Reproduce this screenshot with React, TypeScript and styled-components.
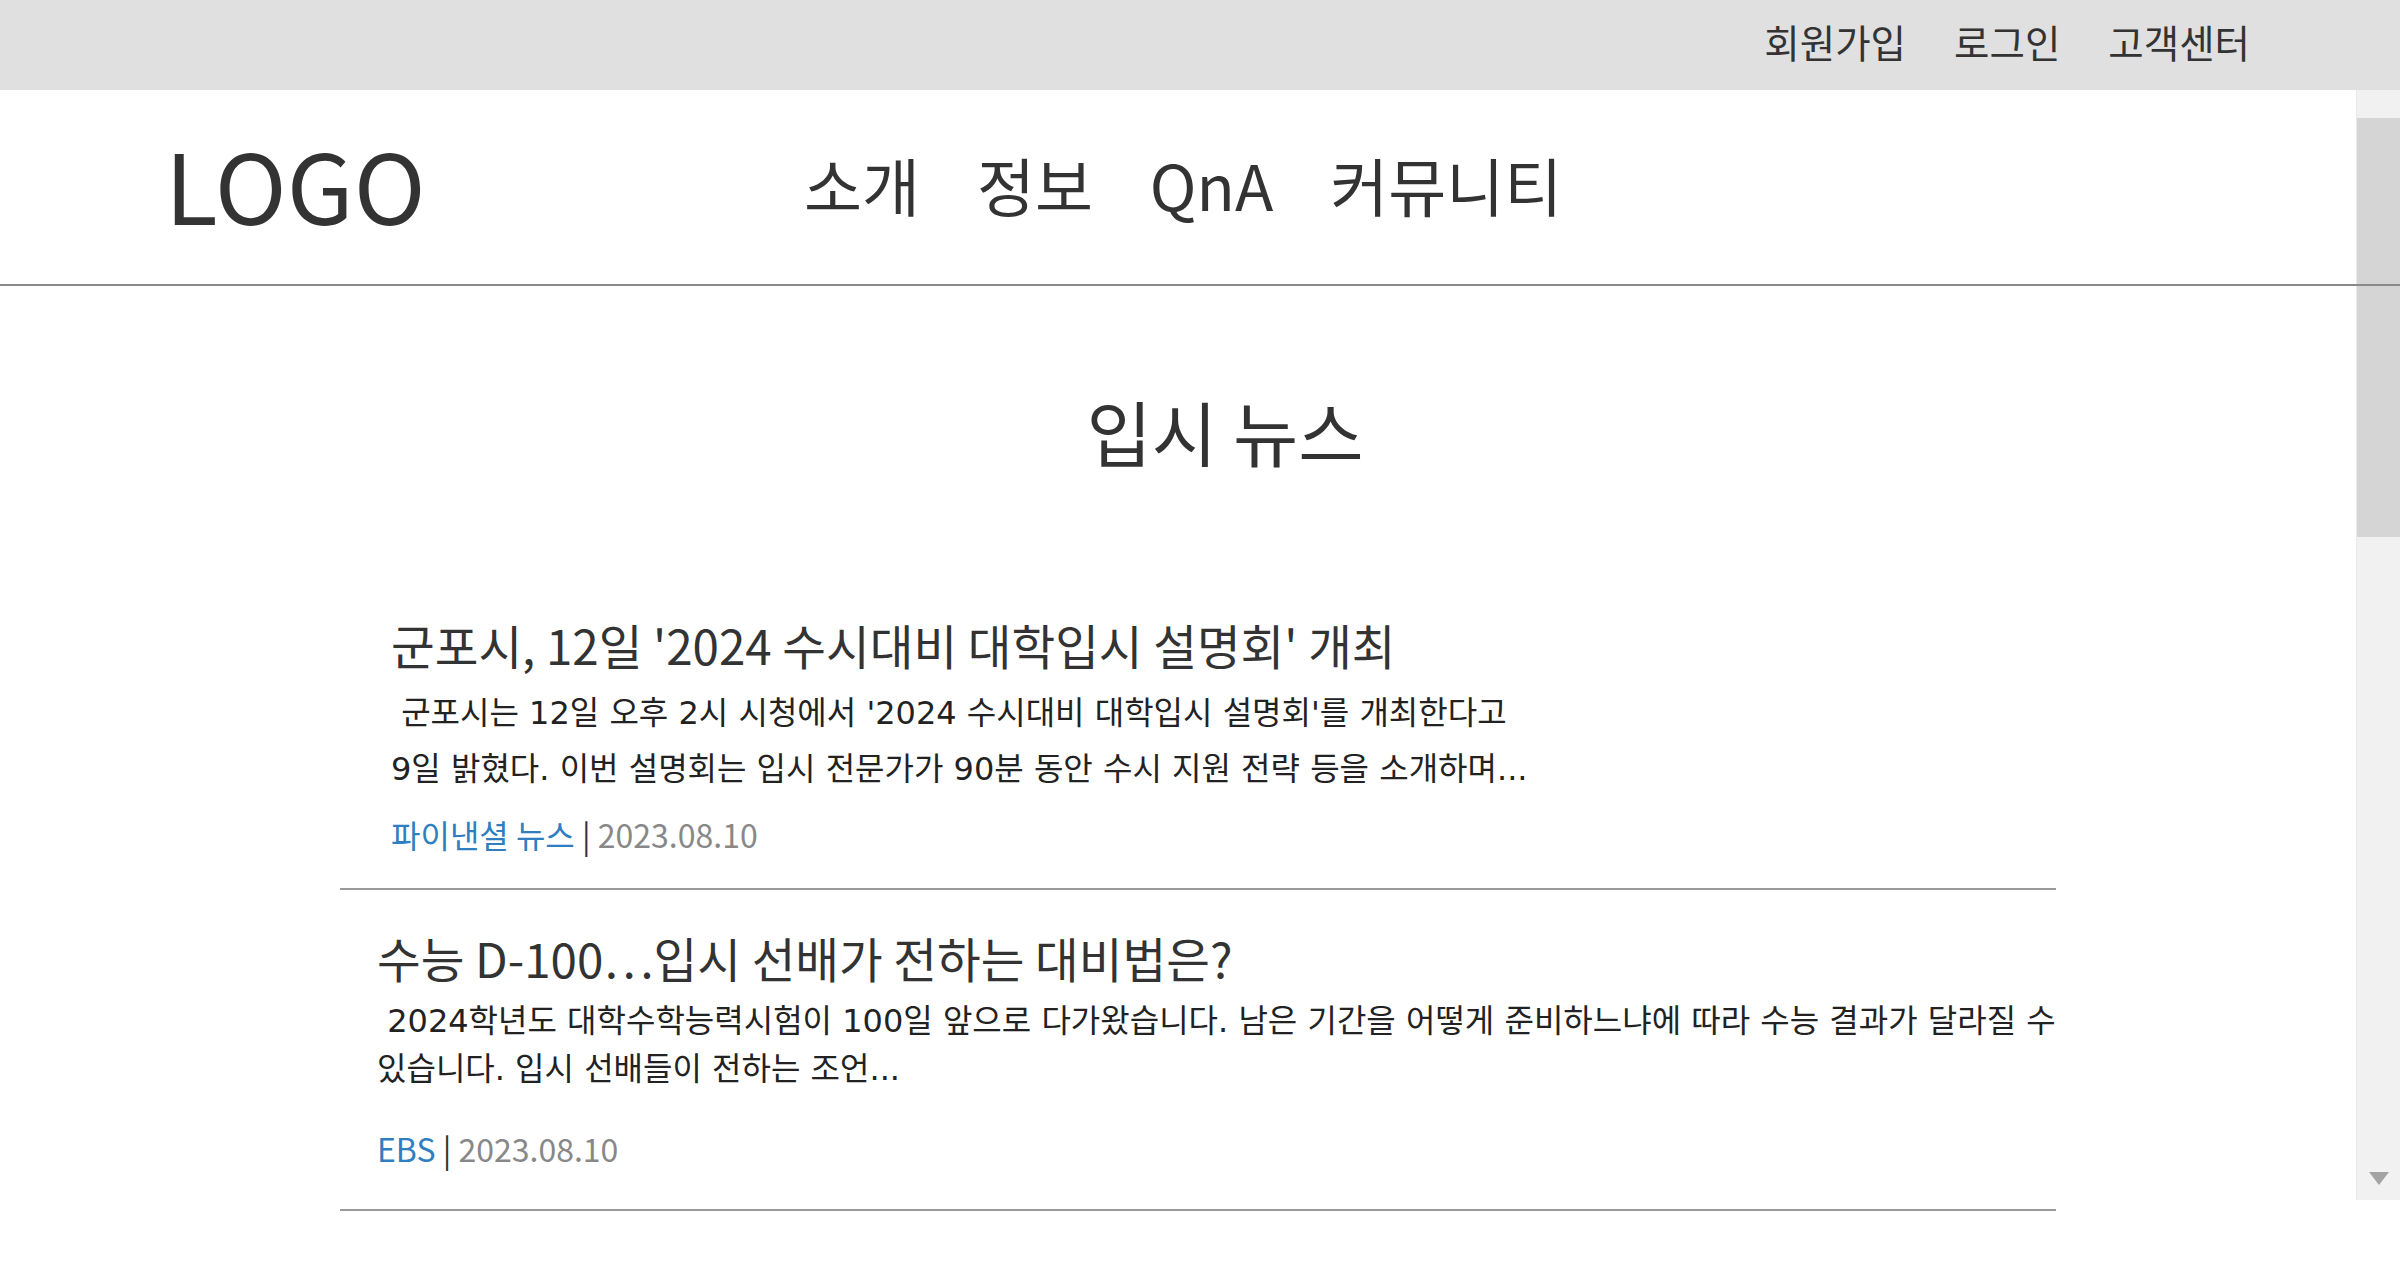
import React from "react";
import styled, { createGlobalStyle } from "styled-components";

const Global = createGlobalStyle`
  html, body {
    margin: 0;
    padding: 0;
    background: #ffffff;
    overflow: hidden;
  }
  body {
    width: 2400px;
    height: 1268px;
    font-family: "Noto Sans CJK KR", "Noto Sans", sans-serif;
    color: #333333;
  }
  * { box-sizing: border-box; }
`;

const Page = styled.div`
  width: 2400px;
  height: 1268px;
  display: flex;
  flex-direction: column;
  background: #ffffff;
`;

const TopBar = styled.div`
  height: 90px;
  background: #e0e0e0;
  display: flex;
  align-items: center;
  justify-content: flex-end;
  gap: 48px;
  padding-right: 150px;
  padding-bottom: 7px;
`;

const TopLink = styled.a`
  font-family: "Noto Sans CJK KR", sans-serif;
  font-size: 38.5px;
  line-height: 1.2;
  color: #333333;
  text-decoration: none;
`;

const Body = styled.div`
  position: relative;
  flex: 1;
`;

const Header = styled.header`
  position: relative;
  z-index: 2;
  height: 196px;
  display: flex;
  align-items: center;
  padding-left: 165px;
  border-bottom: 2px solid #8a8a8a;
`;

const Logo = styled.div`
  width: 639px;
  font-family: "Noto Sans CJK KR", sans-serif;
  font-size: 97px;
  line-height: 1;
  color: #333333;
  padding-bottom: 9px;
`;

const Nav = styled.nav`
  display: flex;
  align-items: center;
  gap: 57px;
  padding-bottom: 6px;
`;

const NavItem = styled.a`
  font-family: "Noto Sans CJK KR", sans-serif;
  font-size: 63px;
  line-height: 1.2;
  color: #333333;
  text-decoration: none;
`;

const Content = styled.main`
  width: 1716px;
  margin-left: 340px;
  position: relative;
  z-index: 1;
`;

const Heading = styled.h2`
  margin: 103px 0 0;
  padding-left: 54px;
  text-align: center;
  font-family: "Noto Sans CJK KR", sans-serif;
  font-weight: 400;
  font-size: 71px;
  line-height: 82px;
  color: #333333;
`;

const NewsList = styled.ul`
  list-style: none;
  margin: 144px 0 0;
  padding: 0;
`;

const NewsItem = styled.li<{ $indent: number; $first?: boolean }>`
  padding-left: ${(p) => p.$indent}px;
  padding-top: ${(p) => (p.$first ? 0 : 38)}px;
  border-bottom: 2px solid #9a9a9a;
`;

const NewsTitle = styled.h3`
  margin: 0;
  font-family: "Noto Sans CJK KR", sans-serif;
  font-weight: 400;
  font-size: 47.5px;
  line-height: 60px;
  color: #333333;
`;

const NewsDesc = styled.p<{ $width: number; $lh: number; $gap: number }>`
  margin: ${(p) => p.$gap}px 0 0;
  max-width: ${(p) => p.$width}px;
  font-family: "DejaVu Sans", "Noto Sans CJK KR", sans-serif;
  font-size: 32px;
  line-height: ${(p) => p.$lh}px;
  color: #222222;
  word-break: keep-all;
`;

const Meta = styled.div<{ $top: number; $bottom: number }>`
  margin-top: ${(p) => p.$top}px;
  padding-bottom: ${(p) => p.$bottom}px;
  font-family: "Noto Sans CJK KR", sans-serif;
  font-size: 32px;
  line-height: 39px;
  color: #333333;
`;

const Source = styled.span`
  color: #2f7fc0;
`;

const DateText = styled.span`
  color: #888888;
`;

const Scrollbar = styled.div`
  position: absolute;
  top: 0;
  right: 0;
  width: 44px;
  height: 1110px;
  background: #f1f1f1;
  border-left: 1px solid #e9e9e9;
  display: flex;
  flex-direction: column;
  align-items: center;
`;

const Thumb = styled.div`
  margin-top: 28px;
  width: 100%;
  height: 419px;
  background: #d5d5d5;
`;

const ArrowDown = styled.svg`
  margin-top: auto;
  margin-bottom: 15px;
  width: 20px;
  height: 13px;
`;

type News = {
  title: string;
  desc: string;
  source: string;
  date: string;
  indent: number;
  width: number;
  lh: number;
  gap: number;
  metaTop: number;
  metaBottom: number;
};

const news: News[] = [
  {
    title: "군포시, 12일 '2024 수시대비 대학입시 설명회' 개최",
    desc:
      "\u00a0군포시는 12일 오후 2시 시청에서 '2024 수시대비 대학입시 설명회'를 개최한다고 9일 밝혔다. 이번 설명회는 입시 전문가가 90분 동안 수시 지원 전략 등을 소개하며...",
    source: "파이낸셜 뉴스",
    date: "2023.08.10",
    indent: 51,
    width: 1150,
    lh: 56,
    gap: 10,
    metaTop: 18,
    metaBottom: 34,
  },
  {
    title: "수능 D-100⋯입시 선배가 전하는 대비법은?",
    desc:
      "\u00a02024학년도 대학수학능력시험이 100일 앞으로 다가왔습니다. 남은 기간을 어떻게 준비하느냐에 따라 수능 결과가 달라질 수 있습니다. 입시 선배들이 전하는 조언...",
    source: "EBS",
    date: "2023.08.10",
    indent: 37,
    width: 1680,
    lh: 47.5,
    gap: 10,
    metaTop: 36,
    metaBottom: 41,
  },
];

export default function App() {
  return (
    <>
      <Global />
      <Page>
        <TopBar>
          <TopLink href="#">회원가입</TopLink>
          <TopLink href="#">로그인</TopLink>
          <TopLink href="#">고객센터</TopLink>
        </TopBar>
        <Body>
          <Scrollbar>
            <Thumb />
            <ArrowDown viewBox="0 0 20 13">
              <polygon points="0,0 20,0 10,13" fill="#a3a3a3" />
            </ArrowDown>
          </Scrollbar>
          <Header>
            <Logo>LOGO</Logo>
            <Nav>
              <NavItem href="#">소개</NavItem>
              <NavItem href="#">정보</NavItem>
              <NavItem href="#">QnA</NavItem>
              <NavItem href="#">커뮤니티</NavItem>
            </Nav>
          </Header>
          <Content>
            <Heading>입시 뉴스</Heading>
            <NewsList>
              {news.map((n, i) => (
                <NewsItem key={n.title} $indent={n.indent} $first={i === 0}>
                  <NewsTitle>{n.title}</NewsTitle>
                  <NewsDesc $width={n.width} $lh={n.lh} $gap={n.gap}>
                    {n.desc}
                  </NewsDesc>
                  <Meta $top={n.metaTop} $bottom={n.metaBottom}>
                    <Source>{n.source}</Source> | <DateText>{n.date}</DateText>
                  </Meta>
                </NewsItem>
              ))}
            </NewsList>
          </Content>
        </Body>
      </Page>
    </>
  );
}
